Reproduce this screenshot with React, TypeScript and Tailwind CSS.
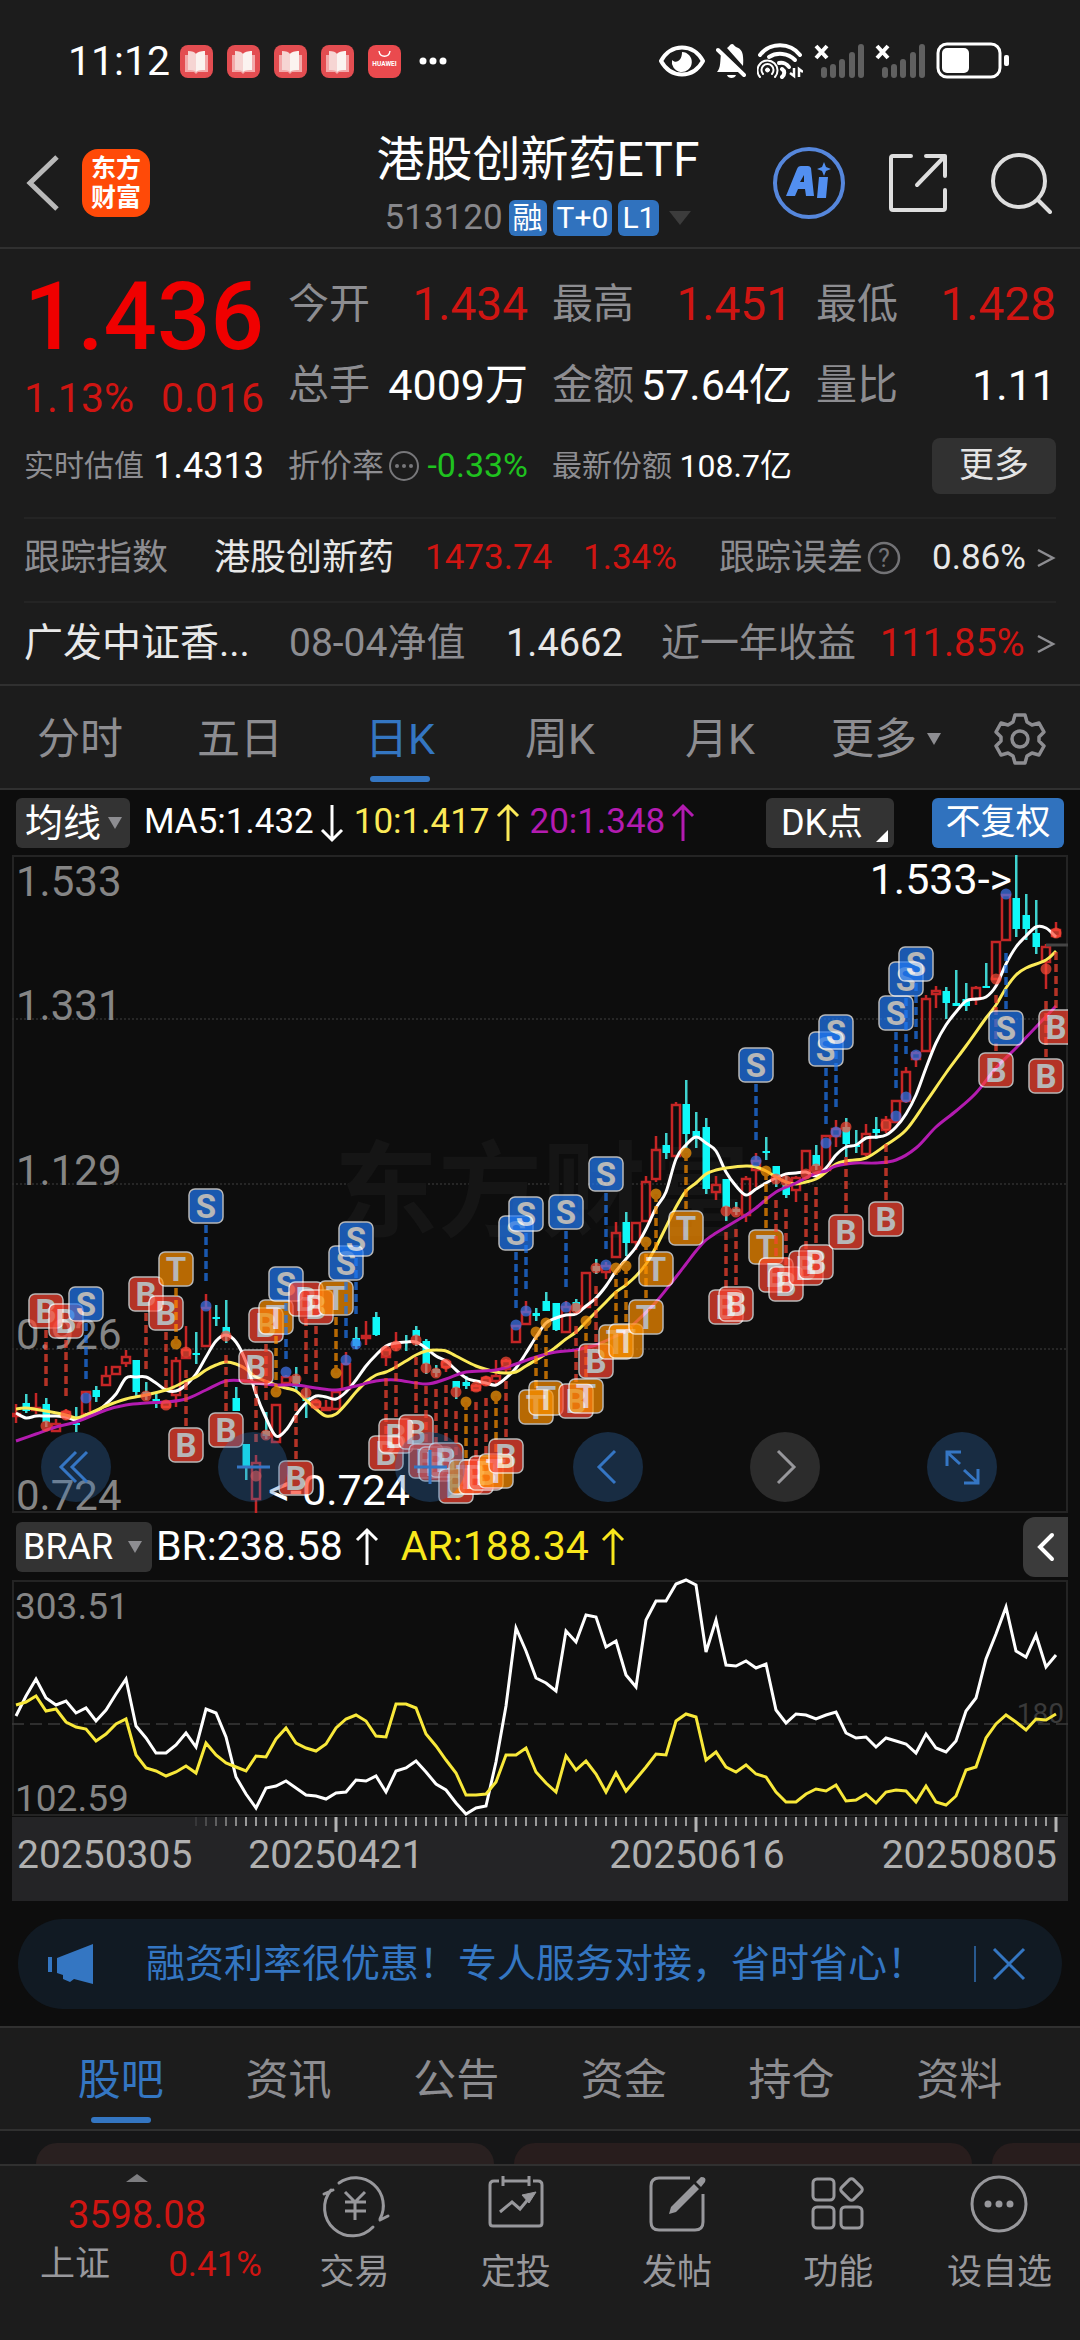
import { useState } from "react";
import clsx from "clsx";

type Candle = [up: number, high: number, low: number, top: number, bottom: number];
type Mark = [index: number, kind: "B" | "S" | "T", y: number, dot: number];
type Point = [index: number, y: number];

// one entry per trading day, 10 units apart
const candles: Candle[] = [
  [1, 549, 568, 559, 561], [0, 539, 558, 548, 556], [1, 538, 559, 553, 555], [0, 543, 572, 549, 567],
  [1, 564, 577, 569, 576], [1, 554, 565, 557, 562], [0, 552, 577, 568, 570], [1, 536, 559, 537, 559],
  [0, 531, 547, 535, 542], [1, 511, 530, 521, 530], [1, 511, 520, 512, 519], [1, 495, 512, 502, 508],
  [0, 505, 541, 505, 537], [0, 527, 545, 537, 541], [0, 537, 553, 544, 548], [1, 546, 553, 547, 552],
  [1, 502, 552, 506, 540], [1, 471, 504, 495, 503], [0, 477, 509, 498, 500], [1, 439, 491, 453, 491],
  [0, 450, 471, 462, 464], [0, 445, 488, 472, 479], [0, 532, 556, 543, 556], [0, 589, 625, 589, 611],
  [1, 600, 658, 608, 644], [0, 557, 584, 576, 581], [1, 550, 588, 550, 587], [1, 520, 529, 522, 528],
  [0, 512, 536, 521, 532], [0, 532, 563, 542, 546], [1, 545, 554, 547, 552], [1, 545, 554, 553, 555],
  [1, 536, 554, 537, 554], [1, 497, 534, 509, 534], [0, 472, 494, 483, 491], [1, 466, 490, 481, 483],
  [0, 457, 481, 462, 480], [1, 491, 511, 495, 502], [1, 477, 496, 490, 492], [0, 480, 496, 486, 487],
  [0, 471, 491, 475, 481], [0, 484, 519, 486, 509], [0, 510, 522, 514, 518], [1, 506, 517, 507, 512],
  [0, 526, 544, 526, 533], [0, 521, 534, 527, 531], [1, 529, 536, 531, 535], [1, 521, 531, 523, 529],
  [1, 505, 529, 521, 526], [1, 504, 518, 506, 514], [1, 471, 487, 471, 487], [1, 446, 470, 457, 469],
  [0, 453, 466, 458, 461], [0, 437, 456, 446, 456], [0, 448, 476, 448, 475], [1, 446, 477, 452, 477],
  [0, 444, 457, 447, 456], [1, 418, 452, 418, 452], [0, 404, 419, 411, 416], [1, 407, 424, 411, 417],
  [1, 367, 402, 378, 402], [0, 357, 401, 367, 388], [1, 367, 395, 368, 387], [1, 321, 366, 327, 366],
  [1, 281, 327, 295, 324], [0, 278, 304, 290, 298], [1, 247, 301, 250, 301], [0, 225, 293, 249, 279],
  [0, 257, 293, 276, 282], [0, 263, 339, 272, 334], [1, 321, 345, 330, 337], [0, 324, 366, 324, 352],
  [0, 347, 360, 354, 357], [1, 321, 367, 324, 360], [1, 298, 332, 306, 315], [0, 282, 305, 296, 298],
  [0, 311, 332, 311, 321], [0, 321, 343, 330, 340], [1, 321, 347, 323, 335], [1, 296, 317, 296, 317],
  [0, 290, 315, 300, 311], [1, 281, 315, 281, 315], [1, 265, 292, 274, 281], [0, 263, 302, 272, 289],
  [0, 275, 298, 290, 292], [1, 269, 301, 279, 299], [0, 262, 284, 274, 278], [1, 261, 278, 265, 275],
  [1, 246, 267, 246, 267], [1, 212, 248, 217, 246], [1, 196, 212, 198, 204], [1, 140, 196, 144, 196],
  [1, 131, 153, 136, 139], [0, 132, 164, 136, 148], [0, 115, 151, 148, 151], [0, 128, 156, 144, 151],
  [1, 131, 150, 133, 144], [0, 108, 133, 131, 133], [1, 86, 124, 87, 124], [1, 39, 85, 40, 85],
  [0, 0, 82, 43, 74], [0, 39, 85, 60, 74], [0, 45, 99, 78, 92], [1, 89, 134, 92, 107],
  [1, 67, 83, 75, 81],
];

const ma5 = [
  558, 563, 561, 561, 561, 562, 565, 560, 557, 549, 539, 523, 522, 522, 528, 535, 536, 530, 519, 502, 486, 480, 487,
  507, 539, 563, 581, 575, 560, 548, 541, 542, 544, 537, 525, 511, 500, 491, 488, 487, 487, 493, 501, 506, 515, 523,
  526, 528, 530, 523, 513, 498, 482, 468, 463, 460, 459, 451, 443, 431, 416, 404, 392, 374, 353, 337, 304, 290, 282,
  288, 296, 317, 331, 340, 334, 328, 323, 319, 318, 317, 321, 313, 300, 292, 290, 283, 282, 280, 272, 259, 240, 213,
  188, 170, 157, 146, 144, 142, 131, 109, 92, 81, 72, 73, 82,
];

const ma10: Point[] = [
  [0, 554], [1, 553], [3, 556], [5, 560], [6, 563], [7, 560], [9, 551], [11, 544], [13, 540], [15, 535], [16, 531],
  [17, 526], [18, 522], [19, 515], [20, 510], [21, 507], [22, 509], [23, 514], [24, 522], [26, 530], [27, 533],
  [28, 536], [29, 545], [30, 554], [31, 561], [32, 559], [33, 549], [34, 537], [35, 527], [36, 520], [37, 517],
  [38, 512], [39, 506], [40, 500], [41, 496], [42, 495], [43, 496], [44, 501], [46, 511], [48, 517], [49, 518],
  [50, 517], [51, 511], [53, 499], [54, 492], [55, 484], [56, 477], [57, 467], [58, 457], [59, 447], [60, 437],
  [61, 430], [62, 421], [63, 409], [64, 392], [65, 372], [66, 352], [67, 336], [68, 328], [69, 319], [70, 315],
  [71, 313], [73, 311], [74, 312], [75, 316], [76, 322], [77, 327], [78, 329], [79, 327], [80, 324], [81, 317],
  [82, 309], [83, 306], [85, 303], [87, 290], [89, 275], [91, 247], [93, 218], [95, 191], [97, 163], [98, 150],
  [99, 133], [100, 120], [101, 113], [103, 105], [104, 96],
];

const ma20: Point[] = [
  [0, 586], [2, 579], [4, 572], [6, 567], [9, 555], [11, 550], [13, 548], [15, 547], [17, 544], [19, 535], [21, 526],
  [23, 526], [24, 528], [26, 530], [28, 530], [30, 533], [32, 535], [34, 531], [36, 526], [38, 525], [41, 529],
  [43, 524], [45, 517], [48, 515], [50, 509], [52, 502], [54, 497], [56, 495], [58, 490], [60, 481], [61, 476],
  [62, 467], [64, 447], [66, 422], [67, 409], [68, 396], [69, 385], [70, 378], [71, 372], [72, 366], [73, 360],
  [74, 353], [76, 337], [78, 328], [80, 318], [81, 316], [82, 311], [84, 308], [86, 308], [88, 305], [90, 293],
  [92, 272], [94, 256], [96, 238], [98, 213], [100, 193], [102, 172], [104, 151],
];

const marks: Mark[] = [
  [3, "B", 456, 571], [5, "B", 466, 560], [7, "S", 449, 543], [13, "B", 439, 541], [15, "B", 458, 550],
  [16, "T", 414, 489], [17, "B", 590, 497], [19, "S", 351, 451], [21, "B", 575, 481], [24, "B", 512, 621],
  [25, "B", 470, 580], [26, "T", 462, 537], [27, "S", 429, 517], [28, "B", 623, 524], [29, "B", 444, 538],
  [30, "B", 452, 549], [32, "T", 443, 518], [33, "S", 408, 505], [34, "S", 384, 489], [37, "B", 598, 496],
  [38, "B", 581, 491], [40, "B", 577, 485], [41, "B", 606, 513], [42, "B", 609, 518], [43, "B", 605, 509],
  [44, "B", 631, 537], [45, "T", 622, 547], [46, "B", 622, 532], [47, "B", 618, 526], [48, "T", 616, 541],
  [49, "B", 601, 507], [50, "S", 378, 470], [51, "S", 359, 456], [52, "T", 552, 477], [53, "T", 543, 468],
  [55, "S", 357, 452], [56, "B", 546, 453], [57, "T", 541, 466], [58, "B", 506, 413], [59, "S", 319, 410],
  [60, "T", 487, 413], [61, "T", 486, 411], [63, "T", 462, 387], [64, "T", 414, 339], [67, "T", 373, 298],
  [71, "B", 452, 356], [72, "B", 449, 357], [74, "S", 210, 306], [75, "T", 392, 316], [76, "B", 420, 324],
  [77, "B", 429, 326], [79, "B", 413, 319], [80, "B", 407, 314], [81, "S", 194, 288], [82, "S", 177, 277],
  [83, "B", 377, 272], [87, "B", 364, 270], [88, "S", 158, 261], [89, "S", 124, 242], [90, "S", 109, 200],
  [98, "B", 215, 124], [99, "S", 173, 39], [103, "B", 221, 114], [104, "B", 172, 78],
];

const brLine = [
  136, 116, 99, 118, 125, 121, 133, 128, 141, 130, 114, 99, 146, 158, 173, 173, 165, 153, 167, 129, 133, 157, 197, 214,
  228, 208, 206, 201, 208, 215, 216, 219, 213, 212, 200, 201, 196, 212, 191, 188, 181, 192, 204, 210, 223, 234, 228,
  226, 182, 126, 48, 71, 98, 103, 111, 51, 62, 35, 37, 67, 61, 95, 107, 40, 21, 21, 4, 0, 5, 72, 40, 85, 86, 81, 88, 84,
  130, 143, 134, 135, 139, 135, 132, 153, 158, 157, 167, 158, 161, 164, 173, 154, 168, 172, 161, 131, 118, 79, 54, 27,
  71, 77, 55, 87, 75,
];

const arLine = [
  125, 122, 116, 131, 129, 142, 147, 149, 161, 154, 144, 139, 175, 188, 191, 196, 192, 186, 193, 163, 175, 183, 187,
  191, 176, 177, 159, 148, 163, 168, 171, 164, 148, 139, 135, 141, 156, 157, 124, 124, 128, 154, 166, 180, 193, 215,
  215, 214, 202, 175, 175, 168, 192, 203, 212, 176, 190, 181, 194, 212, 193, 211, 199, 187, 174, 175, 141, 134, 137,
  180, 172, 187, 192, 185, 194, 197, 212, 222, 222, 214, 209, 211, 205, 221, 220, 214, 223, 212, 210, 211, 222, 206,
  222, 225, 216, 190, 187, 158, 144, 135, 142, 150, 139, 140, 134,
];

const x = (i: number) => 4 + i * 10;
const toPoints = (values: number[]) => values.map((v, i) => `${x(i)},${v}`).join(" ");

// Catmull-Rom through the points, so the averages read as curves
const smooth = (points: Point[]) => {
  const p = points.map(([i, y]) => [x(i), y]);
  let d = `M${p[0][0]},${p[0][1]}`;
  for (let i = 0; i < p.length - 1; i++) {
    const a = p[i - 1] ?? p[i];
    const b = p[i];
    const c = p[i + 1];
    const e = p[i + 2] ?? c;
    d += `C${b[0] + (c[0] - a[0]) / 6},${b[1] + (c[1] - a[1]) / 6} ${c[0] - (e[0] - b[0]) / 6},${c[1] - (e[1] - b[1]) / 6} ${c[0]},${c[1]}`;
  }
  return d;
};

const markColor = { B: "#fb4431", S: "#2079f4", T: "#ff9100" };
const dotColor = { B: "#ff4a36", S: "#4076f0", T: "#ff9a08" };

const Arrow = ({ down }: { down?: boolean }) => (
  <svg viewBox="0 0 24 40" className={clsx("h-10 w-6", down && "rotate-180")} fill="none" stroke="currentColor" strokeWidth="3">
    <path d="M12 38V3M2 13L12 3l10 10" />
  </svg>
);

const Triangle = ({ className }: { className: string }) => (
  <svg viewBox="0 0 16 14" preserveAspectRatio="none" className={className} fill="currentColor">
    <path d="M0 0h16L8 14z" />
  </svg>
);

const Chevron = () => (
  <svg viewBox="0 0 20 20" className="h-5 w-5" fill="none" stroke="#8d8d91" strokeWidth="2.5">
    <path d="M2 2l15 8-15 8" />
  </svg>
);

const StatusBar = () => (
  <div className="flex h-[122px] items-center justify-between pr-[70px] pl-[68px] text-white">
    <div className="flex items-center gap-[10px]">
      <span className="text-[41px] leading-none">11:12</span>
      <div className="flex items-center gap-[14px]">
        {[0, 1, 2, 3].map((n) => (
          <svg key={n} viewBox="0 0 33 33" className="h-[33px] w-[33px]">
            <rect width="33" height="33" rx="8" fill="#e34d51" />
            <path d="M5 10h23v17H18l-2 2-2-2H5z" fill="#f3a9aa" />
            <path d="M8 6c4 0 7 1 8 3v18c-2-2-5-2-8-2z" fill="#f6d5d3" />
            <path d="M25 6c-4 0-8 1-9 3v18c2-2 6-2 9-2z" fill="#fbf3f0" />
          </svg>
        ))}
        <svg viewBox="0 0 33 33" className="h-[33px] w-[33px]">
          <rect width="33" height="33" rx="8" fill="#ea4a4e" />
          <path d="M11 6c1 7 10 7 11 0" fill="none" stroke="#fff" strokeWidth="1.4" />
          <text x="16.5" y="21" fontSize="6.5" fontWeight="700" fill="#fff" textAnchor="middle">HUAWEI</text>
        </svg>
        <svg viewBox="0 0 28 8" className="ml-1 h-2 w-7" fill="#fff">
          <circle cx="4" cy="4" r="3.5" />
          <circle cx="14" cy="4" r="3.5" />
          <circle cx="24" cy="4" r="3.5" />
        </svg>
      </div>
    </div>
    <div className="flex items-center gap-[11px]">
      <svg viewBox="0 0 46 32" className="h-8 w-[46px]">
        <path d="M2 16C12-2 34-2 44 16 34 34 12 34 2 16z" fill="none" stroke="#fff" strokeWidth="4" strokeLinejoin="round" />
        <path d="M23 7a10 10 0 1 1-10 8c4 4 10 1 10-8z" fill="#fff" />
      </svg>
      <svg viewBox="0 0 30 34" className="h-[34px] w-[30px]" fill="#fff">
        <path d="M11 4c2-1 3-4 5-4s2 2 4 3c6 2 8 6 7 19zM5 10l18 18H1c4-4 3-12 4-18zM11 31h9c-1 4-8 4-9 0z" />
        <path d="M2 6l26 25" stroke="#fff" strokeWidth="4" strokeLinecap="round" />
      </svg>
      <svg viewBox="0 0 46 36" className="h-9 w-[46px]" fill="none" stroke="#fff" strokeLinecap="round">
        <path d="M3 12c10-13 30-13 40 0" strokeWidth="4" />
        <path d="M12 14c8-5 19-4 26 3M22 20c4-1 8 1 10 4" strokeWidth="4" />
        <path d="M3 34a10 10 0 1 1 15 0M6 31a6 6 0 1 1 9 0" strokeWidth="2" />
        <circle cx="10.5" cy="27" r="2" fill="#fff" />
        <path d="M25 26c3 2 3 5 0 8" strokeWidth="4" />
        <path d="M37 25v8l-4-3M42 34v-8l4 3" strokeWidth="2.5" strokeLinecap="butt" />
      </svg>
      {[0, 1].map((n) => (
        <svg key={n} viewBox="0 0 50 34" className="h-[34px] w-[50px]">
          <path d="M2 2l11 12M13 2L2 14" stroke="#fff" strokeWidth="4" />
          <path d="M10 26v5M19 23v8M28 18v13M38 11v20M47 3v28" stroke="#606060" strokeWidth="6" strokeLinecap="round" />
        </svg>
      ))}
      <svg viewBox="0 0 74 38" className="h-[38px] w-[74px]">
        <rect x="2" y="2" width="62" height="33" rx="9" fill="none" stroke="#fff" strokeWidth="3" />
        <rect x="6" y="6" width="27" height="25" rx="5" fill="#fff" />
        <rect x="68" y="13" width="5" height="11" rx="2" fill="#fff" />
      </svg>
    </div>
  </div>
);

const Header = () => (
  <header className="grid h-[127px] grid-cols-[1fr_auto_1fr] items-center border-b-2 border-[#303030] pr-7 pb-1 pl-6">
    <div className="flex items-center gap-[22px]">
      <button aria-label="返回">
        <svg viewBox="0 0 36 60" className="h-[60px] w-9" fill="none" stroke="#b9b9b9" strokeWidth="5">
          <path d="M33 4L6 30l27 26" />
        </svg>
      </button>
      <a href="#home" className="grid h-[68px] w-[68px] place-content-center rounded-2xl bg-[#ff4a08] text-center text-[25px] leading-[29px] font-bold text-white">
        <span>东方</span>
        <span>财富</span>
      </a>
    </div>
    <div className="flex flex-col items-center pt-1">
      <h1 className="text-5xl leading-[66px] text-white">港股创新药ETF</h1>
      <button className="flex items-center gap-[6px] leading-[50px] text-[#87878b]">
        <span className="text-[35px]">513120</span>
        {["融", "T+0", "L1"].map((tag) => (
          <span key={tag} className="rounded-md bg-[#3072be] px-1 text-[30px] leading-9 text-white">{tag}</span>
        ))}
        <Triangle className="ml-1 h-[14px] w-[22px] text-[#3c3c3c]" />
      </button>
    </div>
    <div className="flex items-center justify-end gap-[42px]">
      <button aria-label="AI">
        <svg viewBox="0 0 74 74" className="h-[74px] w-[74px]">
          <circle cx="37" cy="37" r="34" fill="none" stroke="#5687dc" strokeWidth="4" />
          <path d="M14 50L25 23q1-3 4-3h7q2 0 3 2l3 28h-8l-1-7h-7l-3 7zM28 36h4v-7z" fill="#528ff0" />
          <path d="M47 31h9l-2 21h-9zM52 16l2 5 5 2-5 2-2 5-2-5-5-2 5-2z" fill="#528ff0" />
        </svg>
      </button>
      <button aria-label="分享">
        <svg viewBox="0 0 60 60" className="h-[60px] w-[60px]" fill="none" stroke="#dedede" strokeWidth="4" strokeLinecap="round" strokeLinejoin="round">
          <path d="M23 3H5q-2 0-2 2v50q0 2 2 2h50q2 0 2-2V37M38 3h19v20M57 3L29 32" />
        </svg>
      </button>
      <button aria-label="搜索">
        <svg viewBox="0 0 62 62" className="h-[62px] w-[62px]" fill="none" stroke="#dedede" strokeWidth="4" strokeLinecap="round">
          <circle cx="29" cy="29" r="26" />
          <path d="M48 48l12 12" />
        </svg>
      </button>
    </div>
  </header>
);

const stats = [
  [{ label: "今开", value: "1.434", red: true }, { label: "总手", value: "4009万" }],
  [{ label: "最高", value: "1.451", red: true }, { label: "金额", value: "57.64亿" }],
  [{ label: "最低", value: "1.428", red: true }, { label: "量比", value: "1.11" }],
];

const Quote = () => (
  <section className="border-b-2 border-[#303030] px-6 pt-[15px] text-[#8d8d91]">
    <div className="grid grid-cols-4 gap-6">
      <div>
        <p className="text-center text-[94px] leading-[106px] font-medium text-[#f00000]">1.436</p>
        <p className="flex justify-between text-[41px] leading-[56px] text-[#cf1512]">
          <span>1.13%</span>
          <span>0.016</span>
        </p>
      </div>
      {stats.map((column) => (
        <dl key={column[0].label}>
          {column.map(({ label, value, red }) => (
            <div key={label} className="flex h-[81px] items-center justify-between whitespace-nowrap">
              <dt className="text-[41px]">{label}</dt>
              <dd className={clsx(red ? "text-[46px] text-[#cf1512]" : "text-[43px] text-white")}>{value}</dd>
            </div>
          ))}
        </dl>
      ))}
    </div>
    <div className="grid h-[79px] grid-cols-4 items-center gap-6 text-[30px] whitespace-nowrap">
      <p className="flex items-center justify-between">
        实时估值<span className="text-[36px] text-white">1.4313</span>
      </p>
      <p className="flex items-center">
        <span className="text-[32px]">折价率</span>
        <svg viewBox="0 0 32 32" className="ml-1 h-8 w-8" fill="#77777a">
          <circle cx="16" cy="16" r="14" fill="none" stroke="#77777a" strokeWidth="2" />
          <circle cx="9" cy="16" r="2" />
          <circle cx="16" cy="16" r="2" />
          <circle cx="23" cy="16" r="2" />
        </svg>
        <span className="ml-auto text-[34px] text-[#1fc21f]">-0.33%</span>
      </p>
      <p className="flex items-center justify-between">
        最新份额<span className="text-[32px] text-white">108.7亿</span>
      </p>
      <button className="ml-auto h-14 w-[124px] rounded-lg bg-[#313131] text-[35px] leading-none text-[#e4e4e4]">更多</button>
    </div>
    <a href="#index" className="mt-3 grid h-[84px] grid-cols-[190fr_211fr_158fr_136fr_213fr_124fr] items-center border-t-2 border-[#242424] pb-1 text-[36px] whitespace-nowrap">
      <span>跟踪指数</span>
      <span className="text-[#e8e8e8]">港股创新药</span>
      <span className="text-[35px] text-[#cf1512]">1473.74</span>
      <span className="text-[35px] text-[#cf1512]">1.34%</span>
      <span className="flex items-center gap-1">
        跟踪误差
        <svg viewBox="0 0 34 34" className="h-[34px] w-[34px]">
          <circle cx="17" cy="17" r="15" fill="none" stroke="#737376" strokeWidth="2.5" />
          <text x="17" y="26" fontSize="25" fill="#737376" textAnchor="middle">?</text>
        </svg>
      </span>
      <span className="flex items-center justify-between text-[35px] text-[#e8e8e8]">
        0.86%<Chevron />
      </span>
    </a>
    <a href="#fund" className="grid h-[83px] grid-cols-[265fr_217fr_155fr_219fr_176fr] items-center border-t-2 border-[#242424] text-[39px] whitespace-nowrap">
      <span className="text-[#e8e8e8]">广发中证香...</span>
      <span>08-04净值</span>
      <span className="text-[38px] text-[#e8e8e8]">1.4662</span>
      <span>近一年收益</span>
      <span className="flex items-center justify-between text-[38px] text-[#cf1512]">
        111.85%<Chevron />
      </span>
    </a>
  </section>
);

const periods = ["分时", "五日", "日K", "周K", "月K"];

const PeriodTabs = () => {
  const [period, setPeriod] = useState("日K");
  return (
    <nav className="grid h-[104px] grid-cols-[repeat(6,4fr)_3fr] border-b-2 border-[#303030] pt-1 text-[43px] text-[#8d8d91]">
      {periods.map((name) => (
        <button
          key={name}
          onClick={() => setPeriod(name)}
          className={clsx("relative leading-none", period === name && "text-[#3476c2]")}
        >
          {name}
          {period === name && <span className="absolute bottom-[6px] left-1/2 h-[6px] w-[60px] -translate-x-1/2 rounded-full bg-[#3476c2]" />}
        </button>
      ))}
      <button className="flex items-center justify-center gap-[10px] pl-3 leading-none">
        更多
        <Triangle className="h-3 w-[14px]" />
      </button>
      <button aria-label="设置" className="flex items-center justify-center">
        <svg viewBox="0 0 52 52" className="h-[52px] w-[52px]" fill="none" stroke="currentColor" strokeWidth="3.5" strokeLinejoin="round">
          <path d="M21 2h10l2 7 5 3 7-2 5 9-5 5v4l5 5-5 9-7-2-5 3-2 7H21l-2-7-5-3-7 2-5-9 5-5v-4l-5-5 5-9 7 2 5-3z" />
          <circle cx="26" cy="26" r="8" />
        </svg>
      </button>
    </nav>
  );
};

const KLineChart = () => (
  <svg viewBox="0 0 1056 658" className="block h-auto w-full">
    <rect x="1" y="1" width="1054" height="656" fill="none" stroke="#242424" strokeWidth="2" />
    <path d="M0 164h1056M0 329h1056M0 494h1056" stroke="#2f2f2f" strokeWidth="1.5" strokeDasharray="2 2" />
    <text x="322" y="374" fontSize="104" fontWeight="700" fill="#151515">东方财富</text>
    <g fontSize="42" fill="#858585">
      <text x="4" y="41">1.533</text>
      <text x="4" y="165">1.331</text>
      <text x="4" y="330">1.129</text>
      <text x="4" y="494">0.926</text>
      <text x="4" y="655">0.724</text>
    </g>
    {candles.map(([up, high, low, top, bottom], i) =>
      up ? (
        <g key={i} stroke="#c52626" strokeWidth="2.5" fill="none">
          <path d={`M${x(i)} ${high}V${top}M${x(i)} ${bottom}V${low}`} />
          <rect x={x(i) - 4} y={top} width="8" height={bottom - top} />
        </g>
      ) : (
        <g key={i} fill="#0ff8f8">
          <rect x={x(i) - 1} y={high} width="2.5" height={low - high} fill="#3fd3cf" />
          <rect x={x(i) - 3.5} y={top} width="7.5" height={bottom - top} />
        </g>
      )
    )}
    <path d="M1034 90h22" stroke="#454545" strokeWidth="3" />
    <g fill="none" strokeWidth="3">
      <path d={smooth(ma5.map((y, i): Point => [i, y]))} stroke="#ffffff" />
      <path d={smooth(ma10)} stroke="#fbea58" />
      <path d={smooth(ma20)} stroke="#b31bb0" />
    </g>
    <g fontSize="43" fill="#ffffff" textAnchor="end">
      <text x="1000" y="39">1.533-&gt;</text>
      <text x="398" y="650">&lt;-0.724</text>
    </g>
    {marks.map(([i, kind, y, dot]) => (
      <g key={i} opacity="0.7">
        <circle cx={x(i)} cy={dot} r="5.5" fill={dotColor[kind]} />
        <path
          d={`M${x(i)} ${y + Math.sign(dot - y) * 19}V${y + Math.sign(dot - y) * 75}`}
          stroke={markColor[kind]}
          strokeWidth="3.5"
          strokeDasharray="8 4"
        />
        <rect x={x(i) - 17} y={y - 17} width="34" height="34" rx="6" fill={markColor[kind]} stroke="#fff" strokeWidth="1.5" />
        <text x={x(i)} y={y + 12} fontSize="33" fontWeight="700" fill="#fff" textAnchor="middle">{kind}</text>
      </g>
    ))}
  </svg>
);

const tools = [
  { label: "最早", d: "M35 20L20 35l15 15M46 20L31 35l15 15" },
  { label: "缩小", d: "M19 35h33" },
  { label: "放大", d: "M19 35h33M35 18v34" },
  { label: "左移", d: "M42 19L26 35l16 16" },
  { label: "右移", d: "M28 19l16 16-16 16", off: true },
  { label: "全屏", d: "M20 34V20h14M21 21l12 11M51 37v14H37M50 50L37 38" },
];

const legend = "flex items-center whitespace-nowrap";

const Charts = () => (
  <section className="bg-[#0d0d0d] px-3">
    <div className="flex h-[65px] items-center gap-[14px] pr-1 pl-1">
      <label className="relative flex items-center">
        <select aria-label="主图指标" className="h-[50px] w-[114px] appearance-none rounded-md bg-[#333333] pl-[9px] text-[38px] leading-none text-white">
          <option>均线</option>
        </select>
        <Triangle className="pointer-events-none absolute right-2 h-3 w-[14px] text-[#8d8d91]" />
      </label>
      <p className="flex items-center gap-[10px] text-[35px]">
        <span className={clsx(legend, "gap-[6px] text-white")}>MA5:1.432<Arrow down /></span>
        <span className={clsx(legend, "gap-[6px] text-[#fbea58]")}>10:1.417<Arrow /></span>
        <span className={clsx(legend, "gap-[6px] text-[#b31bb0]")}>20:1.348<Arrow /></span>
      </p>
      <button className="relative ml-auto h-[50px] w-[128px] rounded-md bg-[#333333] pr-4 text-[36px] leading-none text-white">
        DK点
        <svg viewBox="0 0 12 12" className="absolute right-[6px] bottom-[6px] h-3 w-3" fill="#fff">
          <path d="M12 0v12H0z" />
        </svg>
      </button>
      <button className="ml-6 h-[50px] w-[132px] rounded-md bg-[#3072be] text-[35px] leading-none text-white">不复权</button>
    </div>

    <div className="relative">
      <KLineChart />
      <div className="absolute right-[71px] bottom-[11px] left-[29px] flex justify-between">
        {tools.map(({ label, d, off }) => (
          <button key={label} aria-label={label} className={clsx("rounded-full", off ? "bg-[#2c2c2c]" : "bg-[#3274be]/30")}>
            <svg viewBox="0 0 70 70" className="h-[70px] w-[70px]" fill="none" stroke={off ? "#98989c" : "#3576c4"} strokeWidth="3">
              <path d={d} />
            </svg>
          </button>
        ))}
      </div>
    </div>

    <div className="flex h-[67px] items-center pl-1 text-[41px] text-white">
      <label className="relative flex items-center">
        <select aria-label="副图指标" className="h-[50px] w-[136px] appearance-none rounded-md bg-[#333333] pl-[7px] text-[36px] leading-none text-white">
          <option>BRAR</option>
        </select>
        <Triangle className="pointer-events-none absolute right-[10px] h-3 w-[14px] text-[#8d8d91]" />
      </label>
      <span className={clsx(legend, "ml-1 gap-3")}>BR:238.58<Arrow /></span>
      <span className={clsx(legend, "ml-[22px] gap-3 text-[#f8e71c]")}>AR:188.34<Arrow /></span>
      <button aria-label="展开" className="ml-auto flex h-[60px] w-[45px] items-center justify-center rounded-l-xl bg-[#3b3b3b]">
        <svg viewBox="0 0 18 30" className="h-[30px] w-[18px]" fill="none" stroke="#fff" strokeWidth="4" strokeLinecap="round">
          <path d="M15 3L3 15l12 12" />
        </svg>
      </button>
    </div>

    <svg viewBox="0 0 1056 237" className="block h-auto w-full overflow-visible">
      <rect x="1" y="1" width="1054" height="234" fill="none" stroke="#242424" strokeWidth="2" />
      <path d="M0 144h1056" stroke="#3a3a3a" strokeWidth="1.5" strokeDasharray="12 6" />
      <text x="1052" y="143" fontSize="28" fill="#3a3a3a" textAnchor="end">180</text>
      <g fontSize="37" fill="#858585">
        <text x="3" y="39">303.51</text>
        <text x="3" y="231">102.59</text>
      </g>
      <g fill="none" strokeWidth="3">
        <polyline points={toPoints(brLine)} stroke="#ffffff" />
        <polyline points={toPoints(arLine)} stroke="#f8e83a" />
      </g>
    </svg>

    <svg viewBox="0 0 1056 84" className="block h-auto w-full bg-[#242426]">
      {candles.map((_, i) =>
        i < 18 ? null : i === 32 || i === 68 || i === 104 ? (
          <rect key={i} x={x(i) - 1.5} width="3" height="15" fill="#b4b4b4" />
        ) : (
          <rect key={i} x={x(i) - 1} width="2" height="9" fill="#9a9a9a" opacity={Math.min(1, (i - 17) / 6)} />
        )
      )}
      <g fontSize="39" fill="#b0b0b0">
        <text x="5" y="51">20250305</text>
        <text x="324" y="51" textAnchor="middle">20250421</text>
        <text x="685" y="51" textAnchor="middle">20250616</text>
        <text x="1045" y="51" textAnchor="end">20250805</text>
      </g>
    </svg>
  </section>
);

const Banner = () => (
  <div className="bg-[#0d0d0d] px-[18px] pt-[18px] pb-[17px]">
    <div className="flex h-[90px] items-center rounded-full bg-[#111a23] pr-9 pl-[30px] text-[#3476c2]">
      <svg viewBox="0 0 46 40" className="h-10 w-[46px]" fill="currentColor">
        <path d="M0 13h4v15H0zM9 14L45 0v40l-19-5-4 3-7-3v-4l-6-2z" />
      </svg>
      <a href="#promo" className="ml-[52px] flex-1 text-[39px] leading-none whitespace-nowrap">融资利率很优惠！专人服务对接，省时省心！</a>
      <span className="mr-4 h-9 w-[2px] bg-[#28598f]" />
      <button aria-label="关闭">
        <svg viewBox="0 0 34 34" className="h-[34px] w-[34px]" fill="none" stroke="currentColor" strokeWidth="3">
          <path d="M2 2l30 30M32 2L2 32" />
        </svg>
      </button>
    </div>
  </div>
);

const sections = ["股吧", "资讯", "公告", "资金", "持仓", "资料"];

const SectionTabs = () => {
  const [section, setSection] = useState("股吧");
  return (
    <nav className="flex h-[105px] border-y-2 border-[#303030] px-[37px] pt-1 text-[43px] text-[#8d8d91]">
      {sections.map((name) => (
        <button
          key={name}
          onClick={() => setSection(name)}
          className={clsx("relative flex-1 leading-none", section === name && "text-[#3476c2]")}
        >
          {name}
          {section === name && <span className="absolute bottom-[6px] left-1/2 h-[6px] w-[60px] -translate-x-1/2 rounded-full bg-[#3476c2]" />}
        </button>
      ))}
    </nav>
  );
};

const actions = [
  {
    label: "交易",
    icon: (
      <>
        <path d="M14 9A28 28 0 0 1 55 45M48 53A28 28 0 0 1 6 16M-1 20l9-4M55 46l8-4" strokeLinecap="round" />
        <path d="M20 18l10 10 10-10M20 28h21M20 37h21M30 28v18" />
      </>
    ),
  },
  {
    label: "定投",
    icon: (
      <>
        <path d="M13 7H8q-4 0-4 4v38q0 3 3 3h46q3 0 3-3V11q0-4-4-4h-5M17 2v10M43 2v10M17 7h26" />
        <path d="M14 38l12-10 8 7 10-12" />
        <path d="M36 21l14-3-7 11z" fill="currentColor" strokeWidth="1" />
      </>
    ),
  },
  {
    label: "发帖",
    icon: (
      <>
        <path d="M43 4H12q-8 0-8 8v36q0 8 8 8h36q8 0 8-8V20" />
        <path d="M49 8L54 3q6 0 4 5l-4 5zM47 10l5 5-23 23-7 2 2-7z" fill="currentColor" stroke="none" />
      </>
    ),
  },
  {
    label: "功能",
    icon: (
      <>
        <rect x="5" y="5" width="21" height="21" rx="4" />
        <rect x="5" y="33" width="21" height="21" rx="4" />
        <rect x="33" y="33" width="21" height="21" rx="4" />
        <rect x="35" y="7" width="17" height="17" rx="3" transform="rotate(45 43.5 15.5)" />
      </>
    ),
  },
  {
    label: "设自选",
    icon: (
      <>
        <circle cx="30" cy="30" r="27" />
        <circle cx="19" cy="30" r="2" fill="currentColor" />
        <circle cx="30" cy="30" r="2" fill="currentColor" />
        <circle cx="41" cy="30" r="2" fill="currentColor" />
      </>
    ),
  },
];

const BottomBar = () => (
  <footer className="flex h-[176px] border-t-2 border-[#303030] bg-[#1c1c1c] text-[35px] text-[#98989c]">
    <button className="flex w-[274px] shrink-0 flex-col items-center pt-2">
      <Triangle className="h-2 w-[22px] rotate-180 text-[#7d7d80]" />
      <span className="mt-1 text-[38px] leading-[58px] text-[#cf1512]">3598.08</span>
      <span className="flex w-full justify-between pr-3 pl-10 leading-[42px]">
        上证<span className="text-[#cf1512]">0.41%</span>
      </span>
    </button>
    {actions.map(({ label, icon }) => (
      <button key={label} className="flex flex-1 flex-col items-center pt-2">
        <svg viewBox="0 0 60 60" className="h-[60px] w-[60px] overflow-visible" fill="none" stroke="currentColor" strokeWidth="3">
          {icon}
        </svg>
        <span className="mt-[14px] leading-[50px] whitespace-nowrap">{label}</span>
      </button>
    ))}
  </footer>
);

const App = () => {
  return (
    <div className="flex min-h-screen flex-col overflow-x-hidden bg-[#1c1c1c] font-[Roboto,'Noto_Sans_CJK_SC',sans-serif]">
      <StatusBar />
      <Header />
      <Quote />
      <PeriodTabs />
      <Charts />
      <Banner />
      <SectionTabs />
      <div className="flex h-8 flex-1 gap-5 overflow-hidden bg-[#161617] pt-3 pl-9">
        <div className="w-[458px] shrink-0 rounded-t-3xl bg-[#292020]" />
        <div className="w-[458px] shrink-0 rounded-t-3xl bg-[#281d1d]" />
        <div className="w-[458px] shrink-0 rounded-t-3xl bg-[#281d1d]" />
      </div>
      <BottomBar />
    </div>
  );
};

export default App;
